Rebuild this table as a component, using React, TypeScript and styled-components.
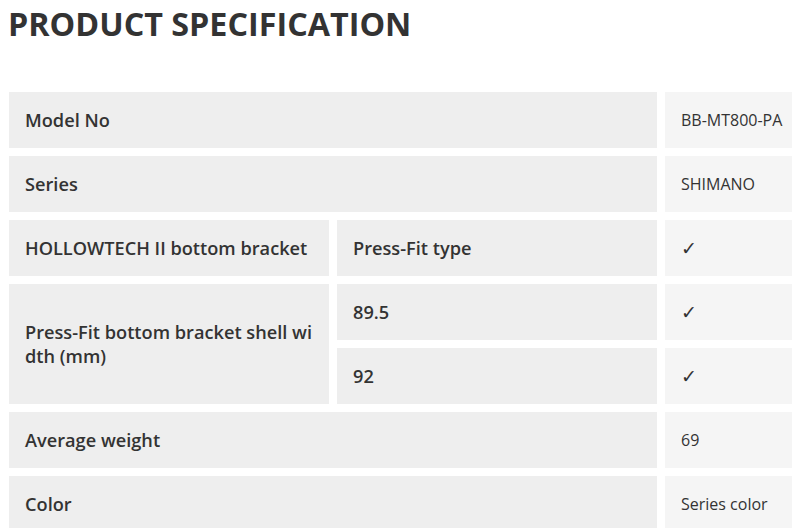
import React from "react"
import styled, { createGlobalStyle } from "styled-components"

const GlobalStyle = createGlobalStyle`
  html, body {
    margin: 0;
    padding: 0;
    overflow: hidden;
    background: #fff;
  }
  body {
    font-family: "Open Sans", "Noto Sans", "Liberation Sans", sans-serif;
    color: #333;
  }
`

const Page = styled.div`
  width: 1100px;
  padding-top: 3px;
`

const Title = styled.h2`
  margin: 0 0 41px 8px;
  font-size: 32.3px;
  line-height: 40px;
  font-weight: 700;
  color: #333;
`

const SpecTable = styled.table`
  border-collapse: separate;
  border-spacing: 8px;
  margin-left: 1px;
  table-layout: fixed;
`

const Label = styled.th`
  width: 288px;
  padding: 16px;
  background: #eeeeee;
  text-align: left;
  vertical-align: middle;
  font-size: 18.2px;
  line-height: 24px;
  font-weight: 600;
  color: #333;
  word-break: break-all;
`

const Value = styled.td`
  width: 168px;
  padding: 16px;
  background: #f5f5f5;
  vertical-align: middle;
  font-size: 16px;
  line-height: 24px;
  font-weight: 400;
  color: #333;
  white-space: nowrap;
`

const CheckMark = styled.span`
  display: inline-block;
  font-family: "DejaVu Sans", sans-serif;
  font-size: 19px;
  line-height: 24px;
  vertical-align: top;
`

const check = <CheckMark>✓</CheckMark>

export default function App() {
  return (
    <>
      <GlobalStyle />
      <Page>
        <Title>PRODUCT SPECIFICATION</Title>
        <SpecTable>
          <colgroup>
            <col style={{ width: 320 }} />
            <col style={{ width: 320 }} />
            <col style={{ width: 200 }} />
          </colgroup>
          <tbody>
            <tr>
              <Label colSpan={2}>Model No</Label>
              <Value>BB-MT800-PA</Value>
            </tr>
            <tr>
              <Label colSpan={2}>Series</Label>
              <Value>SHIMANO</Value>
            </tr>
            <tr>
              <Label>HOLLOWTECH II bottom bracket</Label>
              <Label>Press-Fit type</Label>
              <Value>{check}</Value>
            </tr>
            <tr>
              <Label rowSpan={2}>Press-Fit bottom bracket shell width (mm)</Label>
              <Label>89.5</Label>
              <Value>{check}</Value>
            </tr>
            <tr>
              <Label>92</Label>
              <Value>{check}</Value>
            </tr>
            <tr>
              <Label colSpan={2}>Average weight</Label>
              <Value>69</Value>
            </tr>
            <tr>
              <Label colSpan={2}>Color</Label>
              <Value>Series color</Value>
            </tr>
          </tbody>
        </SpecTable>
      </Page>
    </>
  )
}
